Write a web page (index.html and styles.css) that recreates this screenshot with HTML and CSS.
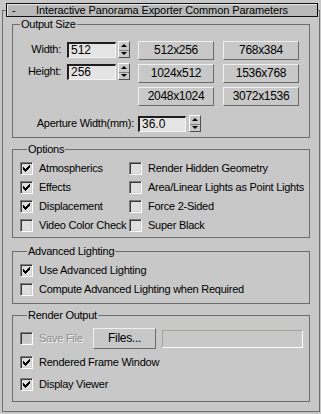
FILE: index.html
```html
<!DOCTYPE html>
<html lang="en">
<head>
  <meta charset="UTF-8" />
  <meta name="viewport" content="width=device-width, initial-scale=1.0" />
  <title>Interactive Panorama Exporter Common Parameters</title>
  <link rel="stylesheet" href="styles.css">
</head>
<body>
  <fieldset class="rollout">
    <legend class="rollout-title"><span class="toggle">-</span><span class="title-text">Interactive Panorama Exporter Common Parameters</span></legend>

    <fieldset class="group output-size">
      <legend>Output Size</legend>
      <div class="output-top">
        <div class="size-fields">
          <div class="field-row">
            <span class="field-label">Width:</span>
            <span class="edit">512</span>
            <span class="spin"><svg width="12" height="17" viewBox="0 0 12 17"><path d="M6 3 L9 6 L3 6 Z" /><path d="M3 11 L9 11 L6 14 Z" /></svg></span>
          </div>
          <div class="field-row">
            <span class="field-label">Height:</span>
            <span class="edit">256</span>
            <span class="spin"><svg width="12" height="17" viewBox="0 0 12 17"><path d="M6 3 L9 6 L3 6 Z" /><path d="M3 11 L9 11 L6 14 Z" /></svg></span>
          </div>
        </div>
        <div class="presets">
          <button class="btn">512x256</button>
          <button class="btn">768x384</button>
          <button class="btn">1024x512</button>
          <button class="btn">1536x768</button>
          <button class="btn">2048x1024</button>
          <button class="btn">3072x1536</button>
        </div>
      </div>
      <div class="field-row aperture">
        <span class="field-label">Aperture Width(mm):</span>
        <span class="edit">36.0</span>
        <span class="spin"><svg width="12" height="17" viewBox="0 0 12 17"><path d="M6 3 L9 6 L3 6 Z" /><path d="M3 11 L9 11 L6 14 Z" /></svg></span>
      </div>
    </fieldset>

    <fieldset class="group options">
      <legend>Options</legend>
      <div class="check-grid">
        <label class="check on"><span class="box"></span>Atmospherics</label>
        <label class="check"><span class="box"></span>Render Hidden Geometry</label>
        <label class="check on"><span class="box"></span>Effects</label>
        <label class="check"><span class="box"></span>Area/Linear Lights as Point Lights</label>
        <label class="check on"><span class="box"></span>Displacement</label>
        <label class="check"><span class="box"></span>Force 2-Sided</label>
        <label class="check"><span class="box"></span>Video Color Check</label>
        <label class="check"><span class="box"></span>Super Black</label>
      </div>
    </fieldset>

    <fieldset class="group advanced">
      <legend>Advanced Lighting</legend>
      <label class="check on"><span class="box"></span>Use Advanced Lighting</label>
      <label class="check"><span class="box"></span>Compute Advanced Lighting when Required</label>
    </fieldset>

    <fieldset class="group render-output">
      <legend>Render Output</legend>
      <div class="save-row">
        <label class="check disabled"><span class="box"></span>Save File</label>
        <button class="btn files">Files...</button>
        <span class="path-field"></span>
      </div>
      <label class="check on frame-window"><span class="box"></span>Rendered Frame Window</label>
      <label class="check on"><span class="box"></span>Display Viewer</label>
    </fieldset>
  </fieldset>
</body>
</html>
```

FILE: styles.css
```css
:root {
  --bg: #c8c8c8;
  --line: #6e6e6e;
  --text: #000;
}
body {
  margin: 0;
  background: var(--bg);
  color: var(--text);
  font-family: "Liberation Sans", Arial, sans-serif;
  font-size: 11px;
  line-height: 13px;
  letter-spacing: -0.25px;
}

/* rollout frame with title bar sitting on its top edge */
.rollout {
  box-sizing: border-box;
  width: 318px;
  height: 409px;
  margin: 3px 0 0 2px;
  padding: 0 9px 9px 9px;
  border: 1px solid var(--line);
  min-width: 0;
}
.rollout-title {
  box-sizing: border-box;
  width: 312px;
  height: 14px;
  margin-left: -6px;
  padding: 0;
  display: flex;
  align-items: center;
  background: #b9b9b9;
  border: 1px solid #111;
  border-right-color: #000;
  box-shadow: inset 1px 1px 0 #e6e6e6;
  line-height: 12px;
  letter-spacing: -0.1px;
}
.toggle { width: 12px; padding-left: 5px; }
.title-text { flex: 1; text-align: center; padding-right: 17px; }

/* group boxes */
.group {
  box-sizing: border-box;
  width: 298px;
  margin: 0;
  padding: 0;
  border: 1px solid var(--line);
  min-width: 0;
}
.group legend {
  margin-left: 7px;
  padding: 0 1px;
  line-height: 13px;
}
.output-size { margin-top: 1px; padding: 10px 0 5px 0; }
.options { margin-top: 5px; padding: 3px 0 2px 7px; }
.advanced { margin-top: 7px; padding: 3px 0 4px 7px; }
.render-output { margin-top: 5px; padding: 6px 0 7px 7px; }

/* output size */
.output-top { display: flex; gap: 8px; }
.size-fields { display: flex; flex-direction: column; gap: 5px; }
.field-row { display: flex; align-items: center; height: 17px; }
.field-label { width: 48px; text-align: right; margin-right: 6px; }
.edit {
  box-sizing: border-box;
  width: 49px;
  height: 16px;
  padding: 0 0 0 2px;
  background: #e4e4e4;
  border-top: 2px solid #1e1e1e;
  border-left: 2px solid #1e1e1e;
  border-right: 1px solid #f4f4f4;
  border-bottom: 1px solid #f4f4f4;
  font-size: 12px;
  line-height: 13px;
  letter-spacing: 0;
}
.spin {
  box-sizing: border-box;
  width: 12px;
  height: 17px;
  margin-left: 2px;
  display: block;
  background: linear-gradient(#808080, #808080) 0 8px / 100% 1px no-repeat, #c8c8c8;
  border-top: 1px solid #fff;
  border-left: 1px solid #fff;
  border-right: 1px solid #505050;
  border-bottom: 1px solid #505050;
}
.spin svg { display: block; margin: -1px 0 0 -1px; }
.presets {
  display: grid;
  grid-template-columns: 76px 76px;
  grid-auto-rows: 19px;
  column-gap: 9px;
  row-gap: 4px;
}
.btn {
  box-sizing: border-box;
  margin: 0;
  padding: 0;
  background: var(--bg);
  color: var(--text);
  font: inherit;
  font-size: 12px;
  letter-spacing: -0.3px;
  border-top: 1px solid #f0f0f0;
  border-left: 1px solid #f0f0f0;
  border-right: 1px solid #6a6a6a;
  border-bottom: 1px solid #6a6a6a;
}
.aperture { margin-top: 9px; }
.aperture .field-label { width: 121px; margin-right: 4px; }
.aperture .edit { width: 48px; }
.aperture .spin { margin-left: 3px; }

/* checkboxes */
.check-grid { display: grid; grid-template-columns: 109px 1fr; grid-auto-rows: 19px; }
.check { display: flex; align-items: center; height: 19px; white-space: nowrap; }
.box {
  box-sizing: border-box;
  width: 13px;
  height: 13px;
  margin-right: 6px;
  flex: none;
  background: #dedede;
  border-top: 1px solid #7c7c7c;
  border-left: 1px solid #7c7c7c;
  border-right: 1px solid #fff;
  border-bottom: 1px solid #fff;
  box-shadow: inset 1px 1px 0 #3a3a3a, inset -1px -1px 0 #d0d0d0;
}
.check.on .box {
  background: #dedede url("data:image/svg+xml,%3Csvg xmlns='http://www.w3.org/2000/svg' width='11' height='11'%3E%3Cpath d='M2 4h1v1h1v1h1V5h1V4h1V3h1V2h1v3H8v1H7v1H6v1H5v1H4V8H3V7H2z' fill='%23000'/%3E%3C/svg%3E") 0 0 no-repeat;
}
.check.disabled { color: #8c8c8c; text-shadow: 1px 1px 0 #f4f4f4; }
.check.disabled .box { background: var(--bg); }

/* render output */
.save-row { display: flex; align-items: center; height: 21px; }
.save-row .check { width: 73px; }
.files { width: 63px; height: 21px; }
.path-field {
  box-sizing: border-box;
  width: 141px;
  height: 18px;
  margin-left: 6px;
  border-top: 1px solid #a9a499;
  border-left: 1px solid #a9a499;
  border-right: 1px solid #fff;
  border-bottom: 1px solid #fff;
}
.frame-window { margin-top: 4px; margin-bottom: 3px; }
```
